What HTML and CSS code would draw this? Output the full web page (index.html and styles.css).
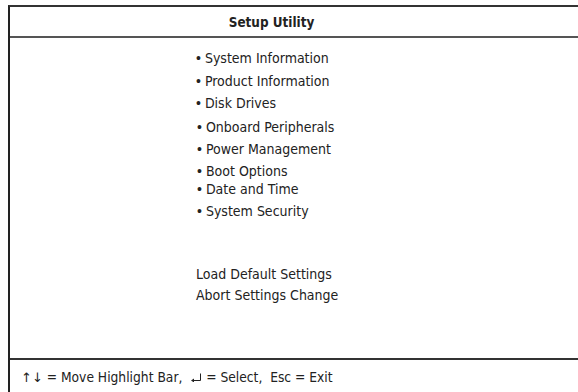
FILE: index.html
```html
<!DOCTYPE html>
<html lang="en">
<head>
<meta charset="UTF-8">
<meta name="viewport" content="width=device-width, initial-scale=1.0">
<link rel="stylesheet" href="styles.css">
<title>Setup Utility</title>
</head>
<body>
  <div class="screen">
    <div class="title">Setup Utility</div>

    <div class="main">
      <ul class="menu">
        <li class="m1">System Information</li>
        <li class="m2">Product Information</li>
        <li class="m3">Disk Drives</li>
        <li class="m4">Onboard Peripherals</li>
        <li class="m5">Power Management</li>
        <li class="m6">Boot Options</li>
        <li class="m7">Date and Time</li>
        <li class="m8">System Security</li>
      </ul>

      <div class="actions">
        <div>Load Default Settings</div>
        <div>Abort Settings Change</div>
      </div>
    </div>

    <div class="footer">
      <span class="keys">&uarr;&darr;</span> = Move Highlight Bar,
      <svg class="enter" width="11" height="9" viewBox="0 0 11 9">
        <path d="M9.5 0.5 V7.5 H2" fill="none" stroke="#222" stroke-width="1"/>
        <path d="M0 7.5 L3 5.5 L3 9.5 Z" fill="#222"/>
      </svg>
      = Select,&nbsp; Esc = Exit
    </div>
  </div>
</body>
</html>
```

FILE: styles.css
```css
body {
  margin: 0;
  background-color: #fff;
  font-family: "DejaVu Sans Condensed", "Liberation Sans", Arial, sans-serif;
  color: #222;
}

.screen {
  margin: 5px 0 0 8px;
  height: 387px;
  border-top: 2px solid #333;
  border-left: 2px solid #222;
  display: flex;
  flex-direction: column;
}

.title {
  height: 26px;
  line-height: 26px;
  padding: 3px 45px 0 0;
  text-align: center;
  font-weight: bold;
  font-size: 13.4px;
  border-bottom: 2px solid #555;
}

.main {
  flex: 1;
  border-bottom: 2px solid #333;
}

.menu {
  list-style: none;
  margin: 9px 0 0 186px;
  padding: 0;
  font-size: 14px;
}

.menu li {
  height: 22px;
  line-height: 22px;
}

.menu li::before {
  content: "\2022";
  font-family: "Liberation Sans", Arial, sans-serif;
  margin-right: 4px;
}

.menu .m2 { margin-top: 1px; }
.menu .m4 { margin-top: 2px; padding-left: 1px; }
.menu .m5 { padding-left: 1px; }
.menu .m6 { padding-left: 1px; }
.menu .m7 { margin-top: -4px; padding-left: 1px; }
.menu .m8 { padding-left: 1px; }

.actions {
  margin: 42px 0 0 186px;
  font-size: 14px;
  line-height: 21px;
}

.footer {
  height: 34px;
  line-height: 34px;
  padding-left: 11px;
  font-size: 13.7px;
}

.keys {
  font-family: "DejaVu Sans", sans-serif;
  font-size: 13px;
}

.enter {
  margin-left: 5px;
}
```
